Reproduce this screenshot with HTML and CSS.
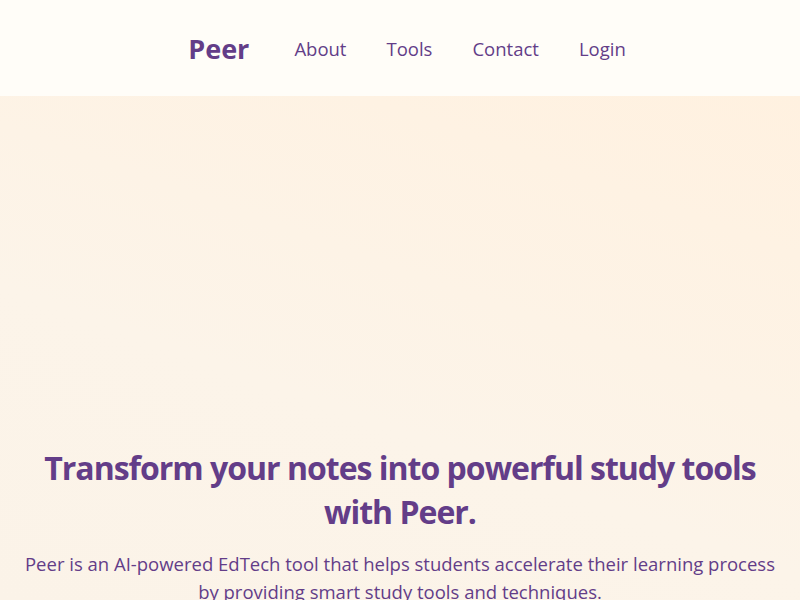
FILE: index.html
```html
<!DOCTYPE html>
<html lang="en">
<head>
<meta charset="utf-8">
<title>Peer</title>
<link rel="stylesheet" href="styles.css">
</head>
<body>
<header class="site-header">
  <nav class="nav">
    <a class="logo" href="#">Peer</a>
    <ul class="nav-links">
      <li><a href="#">About</a></li>
      <li><a href="#">Tools</a></li>
      <li><a href="#">Contact</a></li>
      <li><a href="#">Login</a></li>
    </ul>
  </nav>
</header>
<main class="hero">
  <div class="hero-content">
    <h1 class="hero-title">Transform your notes into powerful study tools with Peer.</h1>
    <p class="hero-text">Peer is an AI-powered EdTech tool that helps students accelerate their learning process by providing smart study tools and techniques.</p>
  </div>
</main>
</body>
</html>
```
FILE: styles.css
```css
* { box-sizing: border-box; }
html, body { margin: 0; padding: 0; }
body {
  font-family: "Open Sans", "Noto Sans", sans-serif;
  color: #633d88;
  background: #fbf3e8;
}
a { color: inherit; text-decoration: none; }
.site-header {
  height: 96px;
  background: #fffdf8;
  display: flex;
  align-items: center;
  justify-content: center;
}
.nav {
  display: flex;
  align-items: center;
  padding-left: 14px;
}
.logo {
  font-size: 27px;
  font-weight: 700;
  color: #633d88;
  margin-right: 45px;
}
.nav-links {
  list-style: none;
  margin: 0;
  padding: 0;
  display: flex;
  gap: 40px;
}
.nav-links a {
  font-size: 18.5px;
}
.hero {
  min-height: 504px;
  background: linear-gradient(200deg, #fff1e0 0%, #fcf4e9 60%, #fbf3e8 100%);
  padding: 350px 24px 0;
}
.hero-content {
  text-align: center;
}
.hero-title {
  margin: 0 0 16px;
  font-size: 32px;
  line-height: 44px;
  font-weight: 700;
  letter-spacing: -1px;
}
.hero-text {
  margin: 0;
  font-size: 18.5px;
  line-height: 28px;
}
```
